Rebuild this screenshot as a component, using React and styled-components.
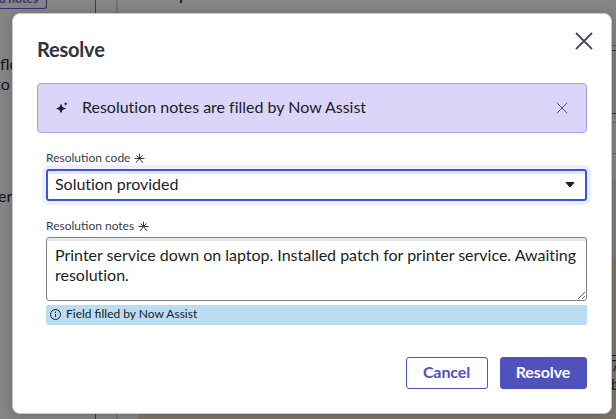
import React from 'react';
import styled, { createGlobalStyle } from 'styled-components';

const Global = createGlobalStyle`
  *{box-sizing:border-box}
  html,body{margin:0;overflow:hidden}
  body{font-family:Lato,"Liberation Sans",sans-serif;color:#181f25}
`;
const Screen = styled.main`position:relative;width:616px;height:419px;overflow:hidden;background:#858585;`;
const Page = styled.div`display:grid;grid-template-columns:95px 1px 20px 2px 1fr;height:419px;`;
const Sidebar = styled.aside`display:flex;flex-direction:column;font-size:16px;line-height:20px;overflow:hidden;white-space:nowrap;`;
const Tag = styled.div`width:47px;height:9px;border:1px solid #35317d;border-top:0;border-left:0;border-radius:0 0 3px 0;color:#35317d;font-size:12px;font-weight:700;line-height:12px;display:flex;justify-content:flex-end;align-items:flex-end;padding:0 8px 3px 0;`;
const Snippet = styled.div`height:20px;margin-top:${p => p.$gap || 0}px;margin-left:${p => p.$shift || 0}px;color:#131619;`;
const Rule = styled.div`background:${p => p.$color};`;
const Content = styled.section`display:flex;flex-direction:column;`;
const Heading = styled.div`height:45px;padding-left:61px;font-size:16px;font-weight:700;line-height:4px;margin-top:-8px;margin-bottom:8px;`;
const Strip = styled.div`flex:${p => p.$h ? `0 0 ${p.$h}px` : '1'};background:${p => p.$bg};border-top:${p => p.$line ? `1px solid ${p.$line}` : '0'};`;
const Note = styled(Strip)`margin-left:20px;display:flex;justify-content:flex-end;align-items:flex-start;padding-top:97px;font-size:15px;line-height:19px;`;
const NoteText = styled.div`width:5px;overflow:hidden;border-top:1px solid #191919;`;

const Dialog = styled.section`position:absolute;left:12px;top:13px;width:600px;height:401px;border:1px solid #cacace;border-radius:8px;background:#fff;box-shadow:0 1px 12px rgba(0,0,0,.2);padding:0 24px;`;
const Header = styled.header`height:69px;display:flex;justify-content:space-between;`;
const Title = styled.h1`margin:22px 0 0;font-size:20px;line-height:27px;font-weight:700;color:#2c3440;letter-spacing:-.2px;`;
const IconButton = styled.button`border:0;background:none;padding:0;display:flex;color:${p => p.$color};`;
const Close = styled(IconButton)`margin:18px -6px 0 0;height:18px;`;
const Banner = styled.div`height:50px;border:1px solid #a99aeb;border-radius:4px;background:#dbd5fa;display:flex;align-items:center;padding:0 18px;font-size:16px;`;
const BannerText = styled.span`margin-left:14px;padding-bottom:3px;flex:1;letter-spacing:-.01px;`;
const Form = styled.div`padding-left:9px;`;
const Label = styled.div`display:flex;align-items:center;gap:4px;height:14px;margin-top:${p => p.$gap}px;font-size:12px;color:#343d47;svg{margin-top:3px}`;
const Select = styled.div`height:32px;margin-top:5px;border:2px solid #3657dc;border-radius:3px;box-shadow:0 0 0 4px #ebeffd,inset 0 3px #e8e8e8;display:flex;align-items:center;justify-content:space-between;padding:0 10px 0 7px;font-size:16px;`;
const SelectText = styled.span`padding-bottom:3px;letter-spacing:-.03px;`;
const Notes = styled.textarea`display:block;width:100%;height:64px;margin-top:5px;border:1px solid #7c8190;border-radius:3px;box-shadow:inset 0 3px #e8e8e8;background:#fff;padding:7px 8px;font:16px/20px Lato,sans-serif;letter-spacing:-.015px;color:#181f25;resize:vertical;outline:0;overflow:hidden;`;
const Hint = styled.div`height:20px;margin-top:4px;border-radius:2px;background:#bbdcf1;display:flex;align-items:center;padding:0 4px 1px;gap:5px;font-size:12px;span{padding-bottom:2px}`;
const Footer = styled.footer`display:flex;justify-content:flex-end;gap:12px;margin-top:32px;`;
const Button = styled.button`height:32px;width:${p => p.$primary ? 87 : 82}px;border:1px solid #4f52bd;border-radius:3px;background:${p => p.$primary ? '#4f52bd' : '#fff'};color:${p => p.$primary ? '#fff' : '#4f52bd'};font:700 16px Lato,sans-serif;padding:0 1px 4px 0;letter-spacing:-.1px;`;

const Cross = ({ size, weight }) => <svg width={size} height={size} viewBox="0 0 18 18" fill="none" stroke="currentColor" strokeWidth={weight}><path d="M1 1l16 16M17 1L1 17"/></svg>;
const Required = () => <svg width="11" height="11" viewBox="0 0 11 11" fill="none" stroke="#343d47" strokeWidth="1.2"><path d="M5.5 .6V5.5M.5 5.5h10M5.5 5.5L2 9.8M5.5 5.5L9 9.8M5.5 5.5L2.6 2.4M5.5 5.5l2.9-3.1" strokeWidth="1"/></svg>;
const Sparkle = () => <svg width="12" height="12" viewBox="0 0 12 12" fill="#181f25"><path d="M5 1.5l1.5 3.6L10.2 6.5 6.5 7.9 5 11.5 3.5 7.9 -.2 6.5l3.7-1.4zM9.7 0l.6 1.3 1.4.6-1.4.6-.6 1.3-.6-1.3-1.4-.6 1.4-.6z"/></svg>;
const Info = () => <svg width="11" height="11" viewBox="0 0 11 11" fill="none" stroke="#181f25"><circle cx="5.5" cy="5.5" r="5"/><path d="M5.5 5v3M5.5 2.8v1.1"/></svg>;

export default function App() {
  return <><Global/><Screen>
    <Page>
      <Sidebar><Tag>d notes</Tag><Snippet $gap={45}>flow</Snippet><Snippet $shift={-5}>to</Snippet><Snippet $gap={92} $shift={-2}>er</Snippet></Sidebar>
      <Rule $color="#35317d"/><div/><Rule $color="#727278"/>
      <Content>
        <Heading>p</Heading><Strip $h={5} $line="#5d5d5d"/><Strip $h={63} $bg="#7e7e7e" $line="#37383b"/><Strip $h={9} $line="#37383b"/><Strip $h={31} $line="#6c6c6c"/><Strip $h={25} $line="#626262"/><Strip $h={80} $bg="#7c7e80"/>
        <Note $bg="#7e7769"><NoteText>7<br/>b</NoteText></Note>
      </Content>
    </Page>
    <Dialog role="dialog" aria-label="Resolve">
      <Header><Title>Resolve</Title><Close $color="#434b59" aria-label="Close"><Cross size={18} weight={1.8}/></Close></Header>
      <Banner><Sparkle/><BannerText>Resolution notes are filled by Now Assist</BannerText><IconButton $color="#5745b5" aria-label="Dismiss"><Cross size={12} weight={1.5}/></IconButton></Banner>
      <Form>
        <Label $gap={17}>Resolution code <Required/></Label>
        <Select><SelectText>Solution provided</SelectText><svg width="10" height="6" viewBox="0 0 10 6"><path d="M1 .5h8L5 5z" fill="#181f25" stroke="#181f25" strokeLinejoin="round"/></svg></Select>
        <Label $gap={17}>Resolution notes <Required/></Label>
        <Notes defaultValue="Printer service down on laptop. Installed patch for printer service. Awaiting resolution."/>
        <Hint><Info/><span>Field filled by Now Assist</span></Hint>
      </Form>
      <Footer><Button>Cancel</Button><Button $primary>Resolve</Button></Footer>
    </Dialog>
  </Screen></>;
}
